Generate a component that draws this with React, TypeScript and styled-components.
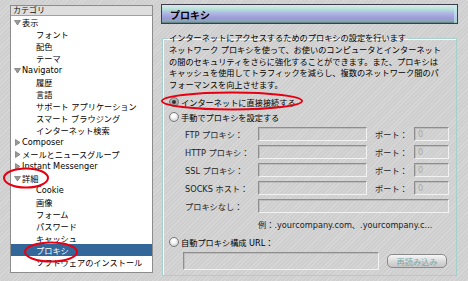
import styled, { createGlobalStyle } from "styled-components";

const GlobalStyle = createGlobalStyle`
  html, body {
    margin: 0;
    padding: 0;
  }
  body {
    width: 468px;
    height: 281px;
    overflow: hidden;
    font-family: "DejaVu Sans", "Noto Sans CJK JP", sans-serif;
    font-size: 8.2px;
    color: #111;
  }
`;

const Screen = styled.div`
  position: relative;
  width: 468px;
  height: 281px;
  box-sizing: border-box;
  padding: 4px 10px 5px 10px;
  display: flex;
  gap: 8px;
  overflow: hidden;
  background: repeating-linear-gradient(
    135deg,
    #d7d7d7 0px,
    #d7d7d7 1px,
    #cfcfcf 1px,
    #cfcfcf 3px
  );
`;

/* ---------- category tree ---------- */

const TreePanel = styled.div`
  width: 143px;
  height: 268px;
  margin-top: 1px;
  box-sizing: border-box;
  border: 1px solid #8c8c8c;
  background: #fff;
  display: flex;
  flex-direction: column;
`;

const TreeHeader = styled.div`
  height: 9px;
  line-height: 9px;
  padding-left: 2px;
  background: #dedede;
  border-bottom: 1px solid #a0a0a0;
  font-size: 8px;
`;

const Row = styled.div<{ $depth: number; $selected?: boolean }>`
  height: 12px;
  display: flex;
  align-items: center;
  gap: 1px;
  padding-left: ${(p) => (p.$depth === 0 ? 3 : 25)}px;
  white-space: nowrap;
  background: ${(p) => (p.$selected ? "#336699" : "transparent")};
  color: ${(p) => (p.$selected ? "#fff" : "#000")};
`;

const Twisty = styled.svg`
  width: 7px;
  height: 7px;
  flex: none;
`;

type Item = { label: string; depth: number; open?: boolean; selected?: boolean };

const items: Item[] = [
  { label: "表示", depth: 0, open: true },
  { label: "フォント", depth: 1 },
  { label: "配色", depth: 1 },
  { label: "テーマ", depth: 1 },
  { label: "Navigator", depth: 0, open: true },
  { label: "履歴", depth: 1 },
  { label: "言語", depth: 1 },
  { label: "サポート アプリケーション", depth: 1 },
  { label: "スマート ブラウジング", depth: 1 },
  { label: "インターネット検索", depth: 1 },
  { label: "Composer", depth: 0, open: false },
  { label: "メールとニュースグループ", depth: 0, open: false },
  { label: "Instant Messenger", depth: 0, open: false },
  { label: "詳細", depth: 0, open: true },
  { label: "Cookie", depth: 1 },
  { label: "画像", depth: 1 },
  { label: "フォーム", depth: 1 },
  { label: "パスワード", depth: 1 },
  { label: "キャッシュ", depth: 1 },
  { label: "プロキシ", depth: 1, selected: true },
  { label: "ソフトウェアのインストール", depth: 1 },
];

function Arrow({ open }: { open: boolean }) {
  return (
    <Twisty viewBox="0 0 7 7">
      {open ? (
        <polygon points="0.5,1.5 6.5,1.5 3.5,6" fill="#9a9a9a" stroke="#666" strokeWidth="0.6" />
      ) : (
        <polygon points="1.5,0.5 6,3.5 1.5,6.5" fill="#9a9a9a" stroke="#666" strokeWidth="0.6" />
      )}
    </Twisty>
  );
}

/* ---------- proxy pane ---------- */

const Pane = styled.div`
  flex: 1;
  display: flex;
  flex-direction: column;
`;

const TitleBar = styled.div`
  height: 20px;
  box-sizing: border-box;
  border: 1px solid #3c3c4c;
  padding-left: 8px;
  display: flex;
  align-items: center;
  font-size: 10px;
  font-weight: bold;
  color: #000;
  background: linear-gradient(
    to bottom,
    #e2e6ee 0%,
    #c4e6de 15%,
    #b2e0d6 25%,
    #b0b6e6 45%,
    #a2a2da 65%,
    #9a9ad2 78%,
    #86aeb0 90%,
    #5e7880 100%
  );
  box-shadow: inset -3px 0 0 rgba(200, 235, 240, 0.6);
`;

const Group = styled.fieldset`
  margin: 9px 1px 0 1px;
  padding: 0 6px 0 5px;
  flex: 1;
  min-width: 0;
  border: 1px solid #a6d0cc;
  box-shadow: inset 1px 1px 0 #f4ffff;
  display: flex;
  flex-direction: column;
`;

const Legend = styled.legend`
  padding: 0 2px 0 1px;
  line-height: 10px;
  color: #000;
`;

const Desc = styled.div`
  margin-top: 2px;
  padding-left: 1px;
  line-height: 11.7px;
  color: #000;
  white-space: nowrap;
`;

const OptionRow = styled.div<{ $h: number }>`
  height: ${(p) => p.$h}px;
  display: flex;
  align-items: center;
  gap: 2px;
  padding-left: 1px;
  color: #000;
  white-space: nowrap;
`;

const Radio = styled.span<{ $on?: boolean }>`
  width: 10px;
  height: 10px;
  box-sizing: border-box;
  border-radius: 50%;
  border: 1px solid #7a7a7a;
  flex: none;
  display: flex;
  align-items: center;
  justify-content: center;
  background: ${(p) =>
    p.$on
      ? "radial-gradient(circle at 50% 40%, #c8c8c8, #8c8c8c)"
      : "radial-gradient(circle at 45% 35%, #ffffff 20%, #d8d8d8 70%, #a8a8a8)"};
  &::after {
    content: "";
    width: 4px;
    height: 4px;
    border-radius: 50%;
    background: #333;
    display: ${(p) => (p.$on ? "block" : "none")};
  }
`;

const FieldRow = styled.div`
  height: 18px;
  display: flex;
  align-items: center;
  padding-left: 17px;
  white-space: nowrap;
  color: #222;
`;

const FieldLabel = styled.span`
  width: 73px;
  flex: none;
`;

const Field = styled.div<{ $w: number; $h?: number }>`
  width: ${(p) => p.$w}px;
  height: ${(p) => p.$h ?? 14}px;
  box-sizing: border-box;
  flex: none;
  border: 1px solid;
  border-color: #8e8e8e #f2f2f2 #f2f2f2 #8e8e8e;
  box-shadow: inset 1px 1px 0 #bcbcbc;
  padding-left: 3px;
  display: flex;
  align-items: center;
  color: #a8a8a8;
`;

const PortLabel = styled.span`
  width: 39px;
  margin-left: 8px;
  flex: none;
`;

const Example = styled.div`
  height: 18px;
  display: flex;
  align-items: center;
  padding-left: 90px;
  white-space: nowrap;
  color: #222;
`;

const UrlRow = styled.div`
  height: 20px;
  display: flex;
  align-items: center;
  gap: 8px;
  padding-left: 15px;
`;

const ReloadButton = styled.div`
  width: 60px;
  height: 14px;
  box-sizing: border-box;
  border: 1px solid #8a8a8a;
  border-radius: 5px;
  background: linear-gradient(to bottom, #f6f6f6, #d6d6d6 60%, #c6c6c6);
  color: #78a8a6;
  display: flex;
  align-items: center;
  justify-content: center;
`;

const Marks = styled.svg`
  position: absolute;
  left: 0;
  top: 0;
  width: 468px;
  height: 281px;
  pointer-events: none;
`;

const proxies = ["FTP プロキシ：", "HTTP プロキシ：", "SSL プロキシ：", "SOCKS ホスト："];

export default function App() {
  return (
    <>
      <GlobalStyle />
      <Screen>
        <TreePanel>
          <TreeHeader>カテゴリ</TreeHeader>
          {items.map((it) => (
            <Row key={it.label} $depth={it.depth} $selected={it.selected}>
              {it.depth === 0 && <Arrow open={!!it.open} />}
              {it.label}
            </Row>
          ))}
        </TreePanel>

        <Pane>
          <TitleBar>プロキシ</TitleBar>
          <Group>
            <Legend>インターネットにアクセスするためのプロキシの設定を行います</Legend>
            <Desc>
              ネットワーク プロキシを使って、お使いのコンピュータとインターネット
              <br />
              の間のセキュリティをさらに強化することができます。また、プロキシは
              <br />
              キャッシュを使用してトラフィックを減らし、複数のネットワーク間のパ
              <br />
              フォーマンスを向上させます。
            </Desc>
            <OptionRow $h={16} style={{ marginTop: 2 }}>
              <Radio $on />
              インターネットに直接接続する
            </OptionRow>
            <OptionRow $h={15}>
              <Radio />
              手動でプロキシを設定する
            </OptionRow>
            {proxies.map((p) => (
              <FieldRow key={p}>
                <FieldLabel>{p}</FieldLabel>
                <Field $w={109} />
                <PortLabel>ポート：</PortLabel>
                <Field $w={35}>0</Field>
              </FieldRow>
            ))}
            <FieldRow>
              <FieldLabel>プロキシなし：</FieldLabel>
              <Field $w={191} />
            </FieldRow>
            <Example>例：.yourcompany.com、.yourcompany.c...</Example>
            <OptionRow $h={18}>
              <Radio />
              自動プロキシ構成 URL：
            </OptionRow>
            <UrlRow>
              <Field $w={196} $h={18} />
              <ReloadButton>再読み込み</ReloadButton>
            </UrlRow>
          </Group>
        </Pane>

        <Marks viewBox="0 0 468 281">
          <ellipse cx="26" cy="178" rx="22" ry="9.5" fill="none" stroke="#e60012" strokeWidth="2" />
          <ellipse cx="51" cy="252" rx="26" ry="9.5" fill="none" stroke="#e60012" strokeWidth="2" />
          <ellipse cx="232" cy="101" rx="70" ry="8.5" fill="none" stroke="#e60012" strokeWidth="2" />
        </Marks>
      </Screen>
    </>
  );
}
